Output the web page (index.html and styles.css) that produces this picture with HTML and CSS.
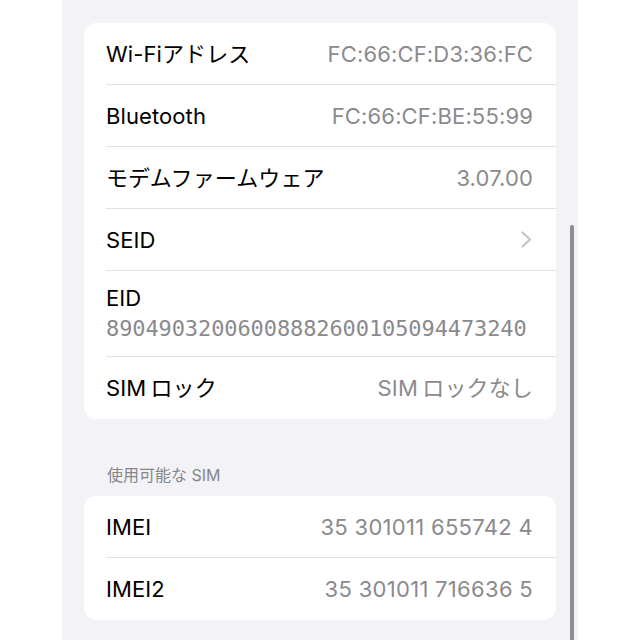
FILE: index.html
```html
<!DOCTYPE html>
<html lang="ja">
<head>
<meta charset="utf-8">
<link rel="stylesheet" href="styles.css">
</head>
<body>
<div class="panel">
  <div class="card first">
    <div class="row"><span class="label">Wi-Fiアドレス</span><span class="value">FC:66:CF:D3:36:FC</span></div>
    <div class="row"><span class="label">Bluetooth</span><span class="value">FC:66:CF:BE:55:99</span></div>
    <div class="row"><span class="label">モデムファームウェア</span><span class="value">3.07.00</span></div>
    <div class="row"><span class="label">SEID</span>
      <svg class="chev" width="11" height="17" viewBox="0 0 11 17"><path d="M1.5 1.5 L9 8.5 L1.5 15.5" fill="none" stroke="#c4c4c7" stroke-width="2.2" stroke-linecap="round" stroke-linejoin="round"/></svg>
    </div>
    <div class="row tall"><span class="label">EID</span><span class="mono">89049032006008882600105094473240</span></div>
    <div class="row last tight"><span class="label">SIM ロック</span><span class="value">SIM ロックなし</span></div>
  </div>
  <div class="header">使用可能な SIM</div>
  <div class="card">
    <div class="row"><span class="label">IMEI</span><span class="value wide">35 301011 655742 4</span></div>
    <div class="row last"><span class="label">IMEI2</span><span class="value wide">35 301011 716636 5</span></div>
  </div>
  <div class="scrollbar"></div>
</div>
</body>
</html>
```
FILE: styles.css
```css
html, body {
  margin: 0;
  padding: 0;
  background: #ffffff;
}
body {
  font-family: Inter, "Noto Sans CJK JP", sans-serif;
  -webkit-font-smoothing: antialiased;
}
.panel {
  position: relative;
  margin-left: 62px;
  width: 516px;
  height: 640px;
  background: #f2f2f7;
  padding-top: 23px;
  box-sizing: border-box;
  overflow: hidden;
}
.card {
  margin-left: 22px;
  width: 472px;
  background: #ffffff;
  border-radius: 12px;
  overflow: hidden;
}
.row {
  display: flex;
  align-items: center;
  justify-content: space-between;
  height: 62px;
  margin-left: 22px;
  padding-right: 23px;
  box-sizing: border-box;
  border-bottom: 1px solid #e1e1e4;
}
.row.last {
  border-bottom: none;
}
.row.tall {
  height: 86px;
  flex-direction: column;
  align-items: flex-start;
  justify-content: flex-start;
  padding-top: 13px;
}
.row.tight .label,
.row.tight .value {
  word-spacing: -2px;
}
.label {
  font-size: 22px;
  color: #000000;
  line-height: 28px;
  letter-spacing: 0.1px;
}
.value {
  font-size: 22px;
  color: #8a8a8e;
  line-height: 28px;
  letter-spacing: 0.15px;
}
.value.wide {
  letter-spacing: 0.3px;
}
.mono {
  font-family: "DejaVu Sans Mono", monospace;
  font-size: 22px;
  color: #8a8a8e;
  line-height: 30px;
  margin-top: 2px;
  letter-spacing: -0.1px;
}
.chev {
  margin-right: 1px;
}
.header {
  margin: 46px 0 0 45px;
  height: 31px;
  font-size: 16px;
  color: #86868b;
  line-height: 20px;
}
.scrollbar {
  position: absolute;
  left: 508px;
  top: 225px;
  width: 4px;
  height: 430px;
  border-radius: 2px;
  background: #8e8e93;
}
```
